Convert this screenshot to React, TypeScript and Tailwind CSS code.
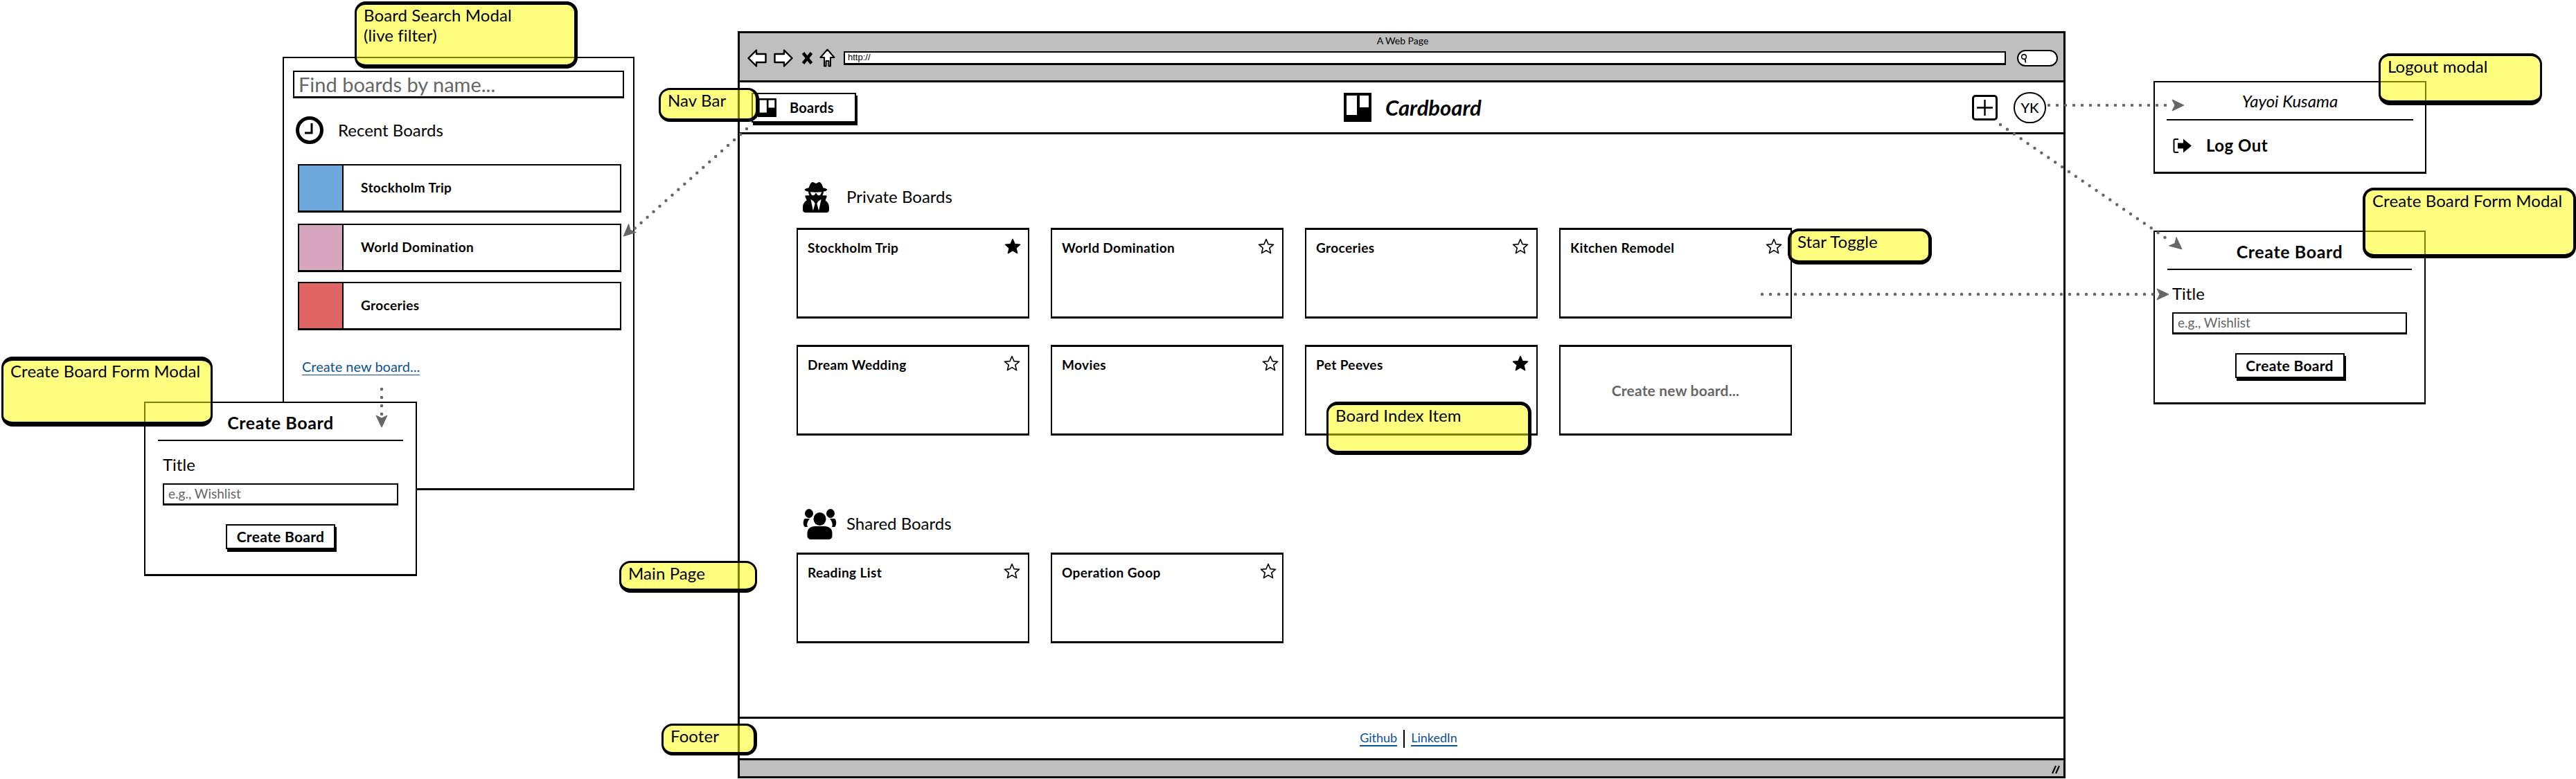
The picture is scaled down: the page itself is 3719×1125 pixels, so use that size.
import { FaUserSecret } from "react-icons/fa"

const privateBoards = [
  { title: "Stockholm Trip", starred: true, starClass: "right-[10px]" },
  { title: "World Domination", starred: false, starClass: "right-[11px]" },
  { title: "Groceries", starred: false, starClass: "right-[11px]" },
  { title: "Kitchen Remodel", starred: false, starClass: "right-[12px]" },
  { title: "Dream Wedding", starred: false, starClass: "right-[11px]" },
  { title: "Movies", starred: false, starClass: "right-[5px]" },
  { title: "Pet Peeves", starred: true, starClass: "right-[11px]" },
]

const sharedBoards = [
  { title: "Reading List", starred: false, starClass: "right-[11px]" },
  { title: "Operation Goop", starred: false, starClass: "right-[8px]" },
]

const recentBoards = [
  { title: "Stockholm Trip", swatch: "bg-[#6fa8dc]", gap: "" },
  { title: "World Domination", swatch: "bg-[#d5a6bd]", gap: "mt-[16px]" },
  { title: "Groceries", swatch: "bg-[#e06666]", gap: "mt-[14px]" },
]

/* ----------------------------- */
/* Icons */
/* ----------------------------- */
function Star({ filled }: { filled: boolean }) {
  return (
    <svg viewBox="0 0 24 23" className="h-[23px] w-[24px]">
      <polygon
        points="12,1.5 15,8.6 22.6,9.2 16.8,14.2 18.6,21.6 12,17.6 5.4,21.6 7.2,14.2 1.4,9.2 9,8.6"
        fill={filled ? "#000" : "#fff"}
        stroke="#000"
        strokeWidth={filled ? 1.5 : 1.6}
        strokeLinejoin="round"
      />
    </svg>
  )
}

function BoardLogo({ className }: { className: string }) {
  return (
    <svg viewBox="0 0 40 42" preserveAspectRatio="none" className={className}>
      <rect width="40" height="42" rx="1" fill="#000" />
      <rect x="4" y="4" width="15" height="28" fill="#fff" />
      <rect x="23" y="4" width="13" height="17" fill="#fff" />
    </svg>
  )
}

function ClockIcon() {
  return (
    <svg viewBox="0 0 40 40" className="h-[40px] w-[40px] shrink-0">
      <circle cx="20" cy="20" r="17.5" fill="#fff" stroke="#000" strokeWidth="5" />
      <path d="M23 10 V24 H13" fill="none" stroke="#000" strokeWidth="3" />
    </svg>
  )
}

function UsersIcon() {
  return (
    <svg viewBox="0 0 49 44" className="h-[44px] w-[49px]">
      <ellipse cx="9" cy="6.5" rx="6" ry="6.5" />
      <ellipse cx="40" cy="6.5" rx="6" ry="6.5" />
      <path d="M3 14 C0 16 0 24 3 26 L7 26 C5 22 7 18 10 14 Z" />
      <path d="M46 14 C49 16 49 24 46 26 L42 26 C44 22 42 18 39 14 Z" />
      <ellipse cx="24.5" cy="14.5" rx="9" ry="9.5" />
      <path d="M6.5 34 C7 28 12 25 18 25 L31 25 C37 25 42 28 42.5 34 L42.5 39 C42.5 42 40 44 37 44 L12 44 C9 44 6.5 42 6.5 39 Z" />
    </svg>
  )
}

function LogoutIcon() {
  return (
    <svg viewBox="0 0 28 23" className="h-[23px] w-[28px] shrink-0">
      <path d="M8 2 H3.5 Q1.5 2 1.5 4 V19 Q1.5 21 3.5 21 H8" fill="none" stroke="#000" strokeWidth="2" />
      <polygon points="7,7.5 15,7.5 15,1.5 27,11.5 15,21.5 15,15.5 7,15.5" fill="#000" />
    </svg>
  )
}

function BrowserControls() {
  return (
    <div className="flex shrink-0 items-center">
      <svg viewBox="0 0 28 26" className="h-[26px] w-[28px]">
        <polygon points="1.5,13 13,1.5 13,7 26.5,7 26.5,19 13,19 13,24.5" fill="#fff" stroke="#000" strokeWidth="2.4" strokeLinejoin="round" />
      </svg>
      <svg viewBox="0 0 28 26" className="ml-[10px] h-[26px] w-[28px]">
        <polygon points="26.5,13 15,1.5 15,7 1.5,7 1.5,19 15,19 15,24.5" fill="#fff" stroke="#000" strokeWidth="2.4" strokeLinejoin="round" />
      </svg>
      <svg viewBox="0 0 17 18" className="ml-[12px] h-[18px] w-[17px]">
        <path d="M2.5 1.5 L14.5 16.5 M14.5 1.5 L2.5 16.5" stroke="#000" strokeWidth="4.5" />
      </svg>
      <svg viewBox="0 0 23 27" className="ml-[9px] h-[27px] w-[23px]">
        <polygon points="11.5,1.5 21.5,13 16,13 16,25.5 13.5,25.5 13.5,18 9.5,18 9.5,25.5 7,25.5 7,13 1.5,13" fill="#fff" stroke="#000" strokeWidth="2" strokeLinejoin="round" />
      </svg>
    </div>
  )
}

function SearchPill() {
  return (
    <div className="ml-[16px] flex h-[24px] w-[59px] shrink-0 items-center rounded-[12px] border-2 border-black bg-white pl-[3px]">
      <svg viewBox="0 0 10 14" className="h-[14px] w-[10px]">
        <circle cx="5" cy="5" r="3.4" fill="none" stroke="#000" strokeWidth="1.6" />
        <path d="M6.5 8 L7.5 13.5" stroke="#000" strokeWidth="1.8" />
      </svg>
    </div>
  )
}

/* ----------------------------- */
/* Wireframe pieces */
/* ----------------------------- */
function Note({ className, children }: { className: string; children: React.ReactNode }) {
  return (
    <div
      className={`absolute z-30 rounded-[16px] border-black bg-[#ffff00]/50 pl-[10px] text-[24px] leading-[29px] tracking-[0.1px] text-black ${className}`}
    >
      {children}
    </div>
  )
}

function BoardCard({ title, starred, starClass }: { title: string; starred: boolean; starClass: string }) {
  return (
    <div className="relative h-[131px] border-2 border-t-[3px] border-b-[3px] border-black bg-white pl-[14px] pt-[14px] text-[19px] font-bold leading-[24px] tracking-[0.4px]">
      {title}
      <div className={`absolute top-[12px] ${starClass}`}>
        <Star filled={starred} />
      </div>
    </div>
  )
}

function SectionTitle({ icon, label }: { icon: React.ReactNode; label: string }) {
  return (
    <div className="flex h-[44px] items-center text-[24px]">
      <div className="flex w-[72px] pl-[9px]">{icon}</div>
      <span className="pb-[2px]">{label}</span>
    </div>
  )
}

function SketchButton({ className, children }: { className: string; children: React.ReactNode }) {
  return (
    <div
      className={`flex items-center justify-center border-2 border-black bg-white font-bold shadow-[2px_4px_0_#000] ${className}`}
    >
      {children}
    </div>
  )
}

function CreateBoardForm({ className }: { className: string }) {
  return (
    <div className={`absolute z-10 flex flex-col border-2 border-b-[3px] border-black bg-white ${className}`}>
      <div className="flex h-[53px] items-center justify-center pt-[4px] text-[25px] font-bold tracking-[0.6px]">
        Create Board
      </div>
      <div className="mx-[18px] h-[2px] bg-black" />
      <div className="ml-[25px] mt-[19px] text-[24px] leading-[30px]">Title</div>
      <div className="mx-[25px] mt-[12px] flex h-[32px] items-center border-2 border-b-[3px] border-black pl-[6px] text-[19px] text-[#666666]">
        e.g., Wishlist
      </div>
      <SketchButton className="mx-auto mt-[27px] h-[36px] w-[158px] text-[21px] tracking-[0.3px]">Create Board</SketchButton>
    </div>
  )
}

function SearchModal() {
  return (
    <div className="absolute left-[408px] top-[82px] flex h-[626px] w-[508px] flex-col border-2 border-b-[3px] border-black bg-white px-[13px] pt-[18px]">
      <div className="flex h-[40px] items-center border-2 border-b-[3px] border-black pl-[6px] text-[29px] text-[#666666]">
        Find boards by name...
      </div>
      <div className="ml-[4px] mt-[26px] flex items-center gap-[21px] text-[24px]">
        <ClockIcon />
        Recent Boards
      </div>
      <div className="ml-[7px] mr-[4px] mt-[29px] flex flex-col">
        {recentBoards.map((board) => (
          <div key={board.title} className={`flex h-[70px] border-2 border-b-[3px] border-black ${board.gap}`}>
            <div className={`w-[64px] border-r-2 border-black ${board.swatch}`} />
            <div className="flex items-center pl-[25px] text-[19px] font-bold tracking-[0.4px]">{board.title}</div>
          </div>
        ))}
      </div>
      <div className="ml-[13px] mt-[41px] w-fit border-b border-[#0b5394] text-[20px] leading-[23px] text-[#0b5394]">
        Create new board...
      </div>
    </div>
  )
}

function LogoutModal() {
  return (
    <div className="absolute left-[3109px] top-[117px] flex h-[134px] w-[394px] flex-col border-2 border-b-[3px] border-black bg-white">
      <div className="flex h-[53px] items-center justify-center text-[24px] italic">Yayoi Kusama</div>
      <div className="mx-[17px] h-[2px] bg-black" />
      <div className="ml-[26px] mt-[18px] flex items-center gap-[20px] text-[24px] font-bold tracking-[0.5px]">
        <LogoutIcon />
        Log Out
      </div>
    </div>
  )
}

function ArrowHead({ x, y, angle }: { x: number; y: number; angle: number }) {
  return (
    <polygon
      points="9,0 -8,-8 -4,0 -8,8"
      fill="#666666"
      stroke="#666666"
      strokeWidth="1"
      strokeLinejoin="round"
      transform={`translate(${x} ${y}) rotate(${angle})`}
    />
  )
}

function Connectors() {
  const links = [
    "M1078 186 L914 332",
    "M551 562 L551 604",
    "M2958 152 L3138 152",
    "M2888 180 L3130 346",
    "M2544 425 L3116 425",
  ]

  return (
    <svg viewBox="0 0 3719 1125" className="pointer-events-none absolute inset-0 z-20 h-[1125px] w-[3719px]">
      {links.map((d) => (
        <path key={d} d={d} fill="none" stroke="#666666" strokeWidth="4.5" strokeLinecap="round" strokeDasharray="0 12" />
      ))}
      <ArrowHead x={907} y={335} angle={138} />
      <ArrowHead x={551} y={608} angle={90} />
      <ArrowHead x={3144} y={152} angle={0} />
      <ArrowHead x={3143} y={354} angle={40} />
      <ArrowHead x={3122} y={425} angle={0} />
    </svg>
  )
}

function BrowserWindow() {
  return (
    <div className="absolute left-[1065px] top-[45px] flex h-[1079px] w-[1917px] flex-col border-[3px] border-black bg-white">
      {/* chrome */}
      <div className="h-[71px] shrink-0 border-b-[3px] border-black bg-[#bfbfbf] pl-[11px] pr-[8px]">
        <div className="h-[22px] pt-[1px] text-center text-[14px] leading-[20px]">A Web Page</div>
        <div className="flex items-center">
          <BrowserControls />
          <div className="ml-[12px] flex h-[20px] flex-1 items-center border-2 border-b-[3px] border-black bg-white pl-[4px] font-['Liberation_Sans',sans-serif] text-[13px]">
            http://
          </div>
          <SearchPill />
        </div>
      </div>

      {/* nav bar */}
      <div className="flex h-[75px] shrink-0 items-center border-b-[3px] border-black pl-[17px] pr-[25px]">
        <SketchButton className="h-[43px] w-[151px] justify-start gap-[19px] pl-[7px] text-[20px] tracking-[0.3px]">
          <BoardLogo className="h-[27px] w-[27px]" />
          Boards
        </SketchButton>
        <div className="ml-[704px] flex items-center gap-[20px] text-[31px] font-bold italic">
          <BoardLogo className="h-[42px] w-[40px]" />
          Cardboard
        </div>
        <div className="ml-auto flex items-center gap-[23px]">
          <div className="flex h-[37px] w-[37px] items-center justify-center rounded-[5px] border-[3px] border-black">
            <svg viewBox="0 0 25 25" className="h-[25px] w-[25px]">
              <path d="M12.5 1 V24 M1 12.5 H24" stroke="#000" strokeWidth="2.4" />
            </svg>
          </div>
          <div className="flex h-[45px] w-[47px] items-center justify-center rounded-full border-2 border-black text-[20px] font-medium">
            YK
          </div>
        </div>
      </div>

      {/* main page */}
      <div className="flex-1 pl-[82px] pt-[69px]">
        <SectionTitle icon={<FaUserSecret className="h-[44px] w-[38px]" preserveAspectRatio="none" />} label="Private Boards" />
        <div className="mt-[22px] grid grid-cols-[repeat(4,336px)] gap-x-[31px] gap-y-[38px]">
          {privateBoards.map((board) => (
            <BoardCard key={board.title} {...board} />
          ))}
          <div className="flex h-[131px] items-center justify-center border-2 border-t-[3px] border-b-[3px] border-black text-[21px] font-bold tracking-[0.2px] text-[#666666]">
            Create new board...
          </div>
        </div>
        <div className="mt-[106px]">
          <SectionTitle icon={<UsersIcon />} label="Shared Boards" />
        </div>
        <div className="mt-[19px] grid grid-cols-[repeat(4,336px)] gap-x-[31px]">
          {sharedBoards.map((board) => (
            <BoardCard key={board.title} {...board} />
          ))}
        </div>
      </div>

      {/* footer */}
      <div className="flex h-[60px] shrink-0 items-center justify-center gap-[9px] border-t-[3px] border-black text-[18px] text-[#0b5394]">
        <span className="ml-[20px] border-b-2 border-[#0b5394] leading-[21px]">Github</span>
        <span className="h-[26px] w-[2px] bg-black" />
        <span className="border-b-2 border-[#0b5394] leading-[21px]">LinkedIn</span>
      </div>
      <div className="relative h-[26px] shrink-0 border-t-[3px] border-black bg-[#bfbfbf]">
        <svg viewBox="0 0 12 14" className="absolute bottom-[3px] right-[5px] h-[14px] w-[12px]">
          <path d="M1 13 L6 2 M6 13 L11 2" stroke="#000" strokeWidth="2.2" />
        </svg>
      </div>
    </div>
  )
}

export default function App() {
  return (
    <div className="relative h-[1125px] w-[3719px] overflow-hidden bg-white font-['Lato',sans-serif] text-black">
      <BrowserWindow />
      <SearchModal />
      <CreateBoardForm className="left-[208px] top-[580px] h-[252px] w-[394px]" />
      <LogoutModal />
      <CreateBoardForm className="left-[3109px] top-[333px] h-[251px] w-[393px]" />
      <Connectors />

      <Note className="left-[512px] top-[2px] h-[97px] w-[322px] border-[3px] border-b-[6px] border-r-[5px] border-t-[5px]">
        Board Search Modal
        <br />
        (live filter)
      </Note>
      <Note className="left-[2px] top-[515px] h-[101px] w-[305px] border-[3px] border-b-[7px] border-t-[6px]">
        Create Board Form Modal
      </Note>
      <Note className="left-[951px] top-[127px] h-[49px] w-[145px] border-[3px] border-b-[5px] border-r-[5px]">Nav Bar</Note>
      <Note className="left-[894px] top-[810px] h-[46px] w-[199px] border-[3px] border-b-[6px]">Main Page</Note>
      <Note className="left-[955px] top-[1045px] h-[46px] w-[138px] border-[3px] border-b-[5px] border-r-[5px]">Footer</Note>
      <Note className="left-[1915px] top-[580px] h-[77px] w-[296px] border-[3px] border-b-[6px] border-r-[5px] border-t-[5px]">
        Board Index Item
      </Note>
      <Note className="left-[2581px] top-[330px] h-[52px] w-[208px] border-[4px] border-b-[6px] border-r-[5px]">
        Star Toggle
      </Note>
      <Note className="left-[3434px] top-[77px] h-[75px] w-[236px] border-[3px] border-b-[7px] border-t-[4px]">
        Logout modal
      </Note>
      <Note className="left-[3411px] top-[271px] h-[102px] w-[308px] border-[4px] border-b-[6px]">
        Create Board Form Modal
      </Note>
    </div>
  )
}
